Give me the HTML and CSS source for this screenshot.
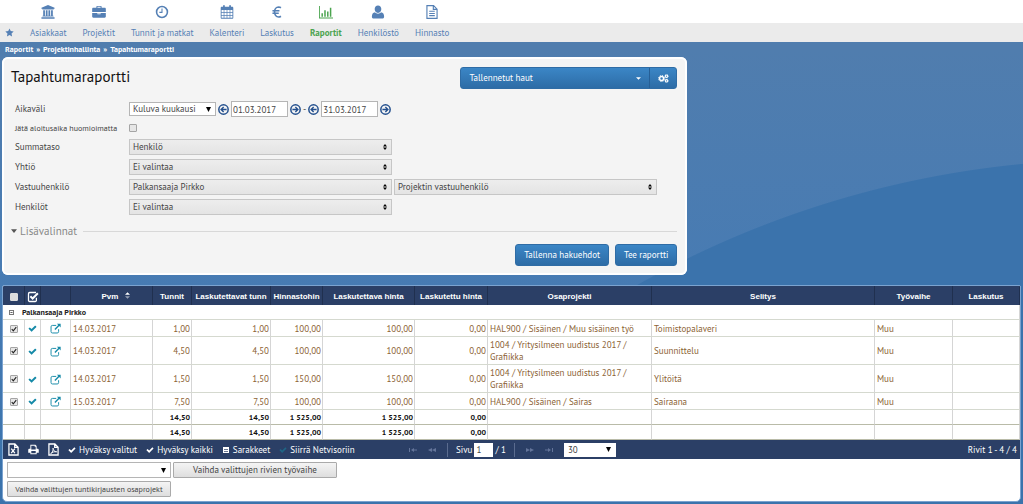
FILE: index.html
```html
<!DOCTYPE html>
<html lang="fi">
<head>
<meta charset="utf-8">
<title>Tapahtumaraportti</title>
<link rel="stylesheet" href="styles.css">
</head>
<body>
<svg class="sprite" aria-hidden="true">
  <symbol id="check" viewBox="0 0 1792 1792"><path d="M1671 566q0 40-28 68l-724 724-136 136q-28 28-68 28t-68-28l-136-136-362-362q-28-28-28-68t28-68l136-136q28-28 68-28t68 28l294 295 656-657q28-28 68-28t68 28l136 136q28 28 28 68z"/></symbol>
  <symbol id="open" viewBox="0 0 16 16"><path d="M9 3.500H3.500a2 2 0 0 0-2 2v7a2 2 0 0 0 2 2h7a2 2 0 0 0 2-2V9" fill="none" stroke="currentColor" stroke-width="1.400"/><path d="M10 1h5.500v5.500l-2-2-5.600 5.600-1.500-1.500L12 3z"/></symbol>
  <symbol id="left" viewBox="0 0 16 16"><circle cx="8" cy="8" r="6.800" fill="none" stroke="currentColor" stroke-width="2.200"/><path d="M12.500 8H4.500M8.200 4.300 4.500 8l3.700 3.700" fill="none" stroke="currentColor" stroke-width="2"/></symbol>
  <symbol id="right" viewBox="0 0 16 16"><circle cx="8" cy="8" r="6.800" fill="none" stroke="currentColor" stroke-width="2.200"/><path d="M3.500 8h8M7.800 4.300 11.500 8l-3.700 3.700" fill="none" stroke="currentColor" stroke-width="2"/></symbol>
</svg>

<nav class="nav">
  <a class="nav-star" href="#" aria-label="Suosikit"><svg viewBox="0 0 16 16"><path d="m8 .8 2.200 4.700 5.200.7-3.800 3.600 1 5.100L8 12.400l-4.600 2.500 1-5.100L.6 6.200l5.200-.7z"/></svg></a>
  <a class="nav-link" href="#"><svg viewBox="0 0 16 16"><path d="M8 0 .5 3v1.200h1V5h13v-.8h1V3zM2.500 6h2v6.200h1V6h2v6.200h1V6h2v6.200h1V6h2v6.200h.8v1H1.700v-1h.8zM.5 14h15v1.700H.5z"/></svg><span>Asiakkaat</span></a>
  <a class="nav-link" href="#"><svg viewBox="0 0 16 16"><path d="M5 3V1.800C5 1.300 5.400 1 6 1h4c.6 0 1 .3 1 .8V3h3.500c.8 0 1.300.5 1.300 1.300V8H.2V4.300C.2 3.500.7 3 1.500 3zm1.200 0h3.600v-.9H6.200zM.2 9h6.100v1.500h3.400V9h6.100v4.200c0 .8-.5 1.300-1.300 1.300h-13c-.8 0-1.300-.5-1.300-1.300zM7.200 9h1.600v.8H7.200z"/></svg><span>Projektit</span></a>
  <a class="nav-link" href="#"><svg viewBox="0 0 16 16"><circle cx="8" cy="8" r="6.200" fill="none" stroke="currentColor" stroke-width="1.800"/><path d="M8 4v4.400H5" fill="none" stroke="currentColor" stroke-width="1.200"/></svg><span>Tunnit ja matkat</span></a>
  <a class="nav-link" href="#"><svg viewBox="0 0 16 16"><path fill-rule="evenodd" d="M2 2h1.500V.3h2V2h5V.3h2V2H14c.7 0 1.200.5 1.200 1.200v11.300c0 .7-.5 1.200-1.200 1.200H2c-.7 0-1.200-.5-1.200-1.200V3.200C.8 2.500 1.300 2 2 2zm-.2 3.800v2.400h2.400V5.800zm3.200 0v2.400h2.600V5.800zm3.400 0v2.400H11V5.800zm3.400 0v2.400h2.400V5.800zM1.800 9v2.400h2.400V9zM5 9v2.400h2.600V9zm3.400 0v2.400H11V9zm3.400 0v2.400h2.400V9zm-10 3.200v2.500h2.400v-2.500zm3.200 0v2.500h2.600v-2.500zm3.400 0v2.500H11v-2.500zm3.400 0v2.500h2.400v-2.500z"/></svg><span>Kalenteri</span></a>
  <a class="nav-link" href="#"><svg viewBox="0 0 16 16"><path d="M12.500 3.200A5 5 0 0 0 9.800 2.300C7.100 2.300 5.200 4.800 5.200 8s1.900 5.700 4.600 5.700c1 0 2-.4 2.700-.9M2.800 6.600h8M2.800 9.400h7.200" fill="none" stroke="currentColor" stroke-width="1.900"/></svg><span>Laskutus</span></a>
  <a class="nav-link current" href="#"><svg viewBox="0 0 16 16"><path d="M0 1h1v13.300h15v1H0zM2.800 9.500h1.700v3.800H2.800zM6 6h1.700v7.300H6zM9.200 7.500h1.700v5.800H9.200zM12.400 3h1.700v10.300h-1.700z"/></svg><span>Raportit</span></a>
  <a class="nav-link" href="#"><svg viewBox="0 0 16 16"><path d="M8 .5c2.300 0 3.800 1.800 3.800 4S10.300 9 8 9 4.200 6.700 4.200 4.500 5.700.5 8 .5zM4.600 8.400C5.500 9.500 6.700 10 8 10s2.500-.5 3.400-1.600c2.400.3 3.600 2.200 3.600 5 0 1.200-.8 2.100-2 2.100H3c-1.200 0-2-.9-2-2.100 0-2.800 1.200-4.700 3.600-5z"/></svg><span>Henkilöstö</span></a>
  <a class="nav-link" href="#"><svg viewBox="0 0 16 16"><path d="M2.200.7h7.600l4 4v10.600H2.200zM9.500 1v4h4M4.800 7.200h6.400M4.800 9.700h6.400M4.800 12.200h6.400" fill="none" stroke="currentColor" stroke-width="1.300"/></svg><span>Hinnasto</span></a>
</nav>

<div class="crumbs"><a href="#">Raportit</a><span>»</span><a href="#">Projektinhallinta</a><span>»</span><a href="#">Tapahtumaraportti</a></div>

<main>
<form class="panel">
  <header class="panel-head">
    <h1>Tapahtumaraportti</h1>
    <div class="saved">
      <button class="saved-main" type="button">Tallennetut haut<svg viewBox="0 0 8 4"><path d="M0 0h8L4 4z"/></svg></button>
      <button class="saved-gear" type="button" aria-label="Asetukset"><svg viewBox="0 0 20 16"><circle cx="6.500" cy="8" r="3.600" fill="none" stroke="currentColor" stroke-width="2.600"/><circle cx="6.500" cy="8" r="5.500" fill="none" stroke="currentColor" stroke-width="1.800" stroke-dasharray="2.300 2.020"/><circle cx="15.500" cy="3.800" r="2.200" fill="none" stroke="currentColor" stroke-width="2"/><circle cx="15.500" cy="3.800" r="3.300" fill="none" stroke="currentColor" stroke-width="1" stroke-dasharray="1.500 1.460"/><circle cx="15.500" cy="12.200" r="2.200" fill="none" stroke="currentColor" stroke-width="2"/><circle cx="15.500" cy="12.200" r="3.300" fill="none" stroke="currentColor" stroke-width="1" stroke-dasharray="1.500 1.460"/></svg></button>
    </div>
  </header>
  <div class="fields">
    <label for="range">Aikaväli</label>
    <div class="field dates">
      <select id="range" class="drop range"><option>Kuluva kuukausi</option></select>
      <button class="step" type="button" aria-label="Edellinen"><svg><use href="#left"/></svg></button>
      <input class="date" type="text" value="01.03.2017" aria-label="Alkupäivä">
      <button class="step" type="button" aria-label="Seuraava"><svg><use href="#right"/></svg></button>
      <span>-</span>
      <button class="step" type="button" aria-label="Edellinen"><svg><use href="#left"/></svg></button>
      <input class="date" type="text" value="31.03.2017" aria-label="Loppupäivä">
      <button class="step" type="button" aria-label="Seuraava"><svg><use href="#right"/></svg></button>
    </div>
    <label class="compact" for="skip">Jätä aloitusaika huomioimatta</label>
    <div class="field"><input id="skip" type="checkbox"></div>
    <label for="level">Summataso</label>
    <div class="field"><select id="level" class="pick"><option>Henkilö</option></select></div>
    <label for="company">Yhtiö</label>
    <div class="field"><select id="company" class="pick"><option>Ei valintaa</option></select></div>
    <label for="owner">Vastuuhenkilö</label>
    <div class="field"><select id="owner" class="pick"><option>Palkansaaja Pirkko</option></select><select class="pick" aria-label="Rooli"><option>Projektin vastuuhenkilö</option></select></div>
    <label for="people">Henkilöt</label>
    <div class="field"><select id="people" class="pick"><option>Ei valintaa</option></select></div>
  </div>
  <div class="more"><svg viewBox="0 0 8 5"><path d="M0 0h8L4 5z"/></svg><span>Lisävalinnat</span></div>
  <div class="actions"><button class="blue" type="button">Tallenna hakuehdot</button><button class="blue" type="button">Tee raportti</button></div>
</form>

<section class="grid">
<table>
  <colgroup><col class="c-sel"><col class="c-ok"><col class="c-open"><col class="c-date"><col class="c-hours"><col class="c-bill"><col class="c-list"><col class="c-price"><col class="c-billed"><col class="c-project"><col><col class="c-phase"><col class="c-inv"></colgroup>
  <thead><tr>
    <th><input class="head-box" type="checkbox" aria-label="Valitse kaikki"></th>
    <th><svg class="head-check" viewBox="0 0 16 16"><path d="M12.500 9v3.500a1.500 1.500 0 0 1-1.500 1.500H3.500A1.500 1.500 0 0 1 2 12.500v-9A1.500 1.500 0 0 1 3.500 2H12" fill="none" stroke="currentColor" stroke-width="1.700"/><path d="m4.500 7 3 3L14.500 3" fill="none" stroke="currentColor" stroke-width="2.600"/></svg></th>
    <th></th>
    <th class="sorted">Pvm <svg class="sort" viewBox="0 0 6 8"><path d="M3 0l3 3H0z"/><path d="M0 5h6L3 8z" opacity=".5"/></svg></th>
    <th>Tunnit</th><th>Laskutettavat tunn</th><th>Hinnastohin</th><th>Laskutettava hinta</th><th>Laskutettu hinta</th><th>Osaprojekti</th><th>Selitys</th><th>Työvaihe</th><th>Laskutus</th>
  </tr></thead>
  <tbody>
    <tr class="group"><td colspan="13"><svg viewBox="0 0 7 7"><path d="M.5.5h6v6h-6zM2 3.500h3" fill="none" stroke="currentColor"/></svg>Palkansaaja Pirkko</td></tr>
    <tr><td><input type="checkbox" checked aria-label="Valitse rivi"></td><td><svg class="ok"><use href="#check"/></svg></td><td><a href="#" aria-label="Avaa"><svg class="go"><use href="#open"/></svg></a></td><td>14.03.2017</td><td>1,00</td><td>1,00</td><td>100,00</td><td>100,00</td><td>0,00</td><td>HAL900 / Sisäinen / Muu sisäinen työ</td><td>Toimistopalaveri</td><td>Muu</td><td></td></tr>
    <tr><td><input type="checkbox" checked aria-label="Valitse rivi"></td><td><svg class="ok"><use href="#check"/></svg></td><td><a href="#" aria-label="Avaa"><svg class="go"><use href="#open"/></svg></a></td><td>14.03.2017</td><td>4,50</td><td>4,50</td><td>100,00</td><td>100,00</td><td>0,00</td><td>1004 / Yritysilmeen uudistus 2017 / Grafiikka</td><td>Suunnittelu</td><td>Muu</td><td></td></tr>
    <tr><td><input type="checkbox" checked aria-label="Valitse rivi"></td><td><svg class="ok"><use href="#check"/></svg></td><td><a href="#" aria-label="Avaa"><svg class="go"><use href="#open"/></svg></a></td><td>14.03.2017</td><td>1,50</td><td>1,50</td><td>150,00</td><td>150,00</td><td>0,00</td><td>1004 / Yritysilmeen uudistus 2017 / Grafiikka</td><td>Ylitöitä</td><td>Muu</td><td></td></tr>
    <tr><td><input type="checkbox" checked aria-label="Valitse rivi"></td><td><svg class="ok"><use href="#check"/></svg></td><td><a href="#" aria-label="Avaa"><svg class="go"><use href="#open"/></svg></a></td><td>15.03.2017</td><td>7,50</td><td>7,50</td><td>100,00</td><td>100,00</td><td>0,00</td><td>HAL900 / Sisäinen / Sairas</td><td>Sairaana</td><td>Muu</td><td></td></tr>
    <tr class="sum"><td></td><td></td><td></td><td></td><td>14,50</td><td>14,50</td><td>1 525,00</td><td>1 525,00</td><td>0,00</td><td></td><td></td><td></td><td></td></tr>
    <tr class="sum"><td></td><td></td><td></td><td></td><td>14,50</td><td>14,50</td><td>1 525,00</td><td>1 525,00</td><td>0,00</td><td></td><td></td><td></td><td></td></tr>
  </tbody>
</table>
<div class="bar">
  <div class="tools">
    <button type="button" class="file" aria-label="Excel"><svg viewBox="0 0 12 14"><path d="M1 1h6.500L11 4.500V13H1zM7.300 1v3.700H11M3.500 6l4 5M7.500 6l-4 5" fill="none" stroke="currentColor" stroke-width="1.400"/></svg></button>
    <button type="button" class="file" aria-label="Tulosta"><svg viewBox="0 0 14 14"><path fill-rule="evenodd" d="M3 1h6.500L11 2.500V6h1c1 0 1.700.7 1.700 1.600V11H11v2H3v-2H.3V7.600C.3 6.700 1 6 2 6h1zm1.200 1.200V7h5.600V3.500H8.500V2.200zM4.200 9v2.800h5.600V9z"/></svg></button>
    <button type="button" class="file" aria-label="PDF"><svg viewBox="0 0 12 14"><path d="M1 1h6.500L11 4.500V13H1zM7.300 1v3.700H11" fill="none" stroke="currentColor" stroke-width="1.400"/><path d="M3 11.500c2-1.500 3-4 2.500-6 .2 2.500 1.500 4 4 4-3-.3-4.500.3-6.500 2z" fill="none" stroke="currentColor"/></svg></button>
    <button type="button" class="tool"><svg><use href="#check"/></svg>Hyväksy valitut</button>
    <button type="button" class="tool"><svg><use href="#check"/></svg>Hyväksy kaikki</button>
    <button type="button" class="tool"><svg viewBox="0 0 8 8"><path d="M1 1h6v6H1z"/><path d="M2 3.500h4M2 5.500h4" stroke="#2b3f66" stroke-width=".7"/></svg>Sarakkeet</button>
    <button type="button" class="tool transfer"><svg><use href="#check"/></svg>Siirrä Netvisoriin</button>
  </div>
  <div class="pager">
    <button type="button" aria-label="Ensimmäinen"><svg viewBox="0 0 8 6"><path d="M0 1h1v4H0zM5 1v4L2 3zM8 2.500v1H5v-1z"/></svg></button>
    <button type="button" aria-label="Edellinen"><svg viewBox="0 0 8 6"><path d="M4 1v4L0 3zM8 1v4L4 3z"/></svg></button>
    <label class="page">Sivu <input type="text" value="1"> / 1</label>
    <button type="button" aria-label="Seuraava"><svg viewBox="0 0 8 6"><path d="M0 1v4l4-2zM4 1v4l4-2z"/></svg></button>
    <button type="button" aria-label="Viimeinen"><svg viewBox="0 0 8 6"><path d="M7 1h1v4H7zM3 1v4l3-2zM0 2.500v1h3v-1z"/></svg></button>
    <select class="drop size" aria-label="Rivejä sivulla"><option>30</option></select>
  </div>
  <div class="count">Rivit 1 - 4 / 4</div>
</div>
<div class="bulk">
  <select class="drop" aria-label="Työvaihe"><option></option></select>
  <button type="button" class="gray">Vaihda valittujen rivien työvaihe</button>
  <button type="button" class="gray compact">Vaihda valittujen tuntikirjausten osaprojekt</button>
</div>
</section>
</main>
</body>
</html>
```
FILE: styles.css
```css
* { box-sizing: border-box; }
body {
  margin: 0;
  min-height: 100vh;
  font: 9px/12px "PT Sans", Lato, sans-serif;
  color: #444;
  background:
    radial-gradient(circle 973px at 1115px 1132px, #3b73ac 0 972px, transparent 973px),
    linear-gradient(#507dae 50px, #477bb3 290px, #3b73ac 480px);
  background-color: #3b73ac;
}
button, select, input { font: inherit; color: inherit; margin: 0; }
button { cursor: pointer; padding: 0; border: 0; background: none; white-space: nowrap; }
a { color: inherit; text-decoration: none; }
svg { fill: currentColor; display: block; }
.sprite { display: none; }
.compact { font-size: 8px; }

/* Navigation */
.nav {
  display: flex;
  gap: 16px;
  padding-left: 5px;
  color: #5580b5;
  background: linear-gradient(#fff 23px, #ebebeb 23px);
}
.nav-star { align-self: end; padding: 5px 0; }
.nav-star svg { width: 9px; height: 9px; }
.nav-link { display: grid; grid-template-rows: 23px 19px; place-items: center; }
.nav-link svg { width: 14px; height: 14px; }
.nav-link.current { color: #4ba44f; font-weight: bold; }
.crumbs { display: flex; gap: 3px; padding: 1px 5px 2px; font-size: 8px; font-weight: bold; color: #fff; }

/* Search panel */
.panel {
  width: 67%;
  margin-left: 2px;
  padding: 10px 10px 9px 9px;
  border-radius: 6px;
  background: #f4f4f4;
  box-shadow: inset 0 0 0 2px #fff;
}
.panel-head { display: flex; justify-content: space-between; }
h1 { margin: 0; font-size: 15px; line-height: 20px; font-weight: normal; color: #111; }
.saved { display: flex; width: 217px; height: 22px; border-radius: 3px; overflow: hidden; color: #fff; background: linear-gradient(#3b86c6, #2d6ca6); border: 1px solid #2f6ca5; }
.saved-main { flex: 1; display: flex; justify-content: space-between; align-items: center; padding: 0 8px; border-right: 1px solid #265f96; }
.saved-main svg { width: 5px; height: 3px; }
.saved-gear { width: 26px; display: grid; place-items: center; }
.saved-gear svg { width: 11px; height: 9px; }
.fields { display: grid; grid-template-columns: 114px 1fr; row-gap: 4px; align-items: center; margin-top: 12px; padding-left: 4px; white-space: nowrap; }
.field { display: flex; gap: 2px; align-items: center; min-height: 14px; }
.drop {
  appearance: none;
  border: 1px solid #b5b5b5;
  border-radius: 0;
  background: #fff url("data:image/svg+xml,%3Csvg xmlns='http://www.w3.org/2000/svg' viewBox='0 0 5 5'%3E%3Cpath d='M0 0h5L2.500 5z'/%3E%3C/svg%3E") no-repeat right 4px center / 5px 5px;
  padding: 0 3px;
}
.range { width: 87px; height: 14px; }
.step { color: #24508e; }
.step svg { width: 11px; height: 11px; }
.date { width: 57px; height: 16px; padding: 0 1px; border: 1px solid #b5b5b5; background: #fff; }
.pick {
  appearance: none;
  width: 263px;
  height: 16px;
  padding: 0 3px;
  border: 1px solid #c6c6c6;
  border-radius: 0;
  background: url("data:image/svg+xml,%3Csvg xmlns='http://www.w3.org/2000/svg' viewBox='0 0 4 6'%3E%3Cpath d='M0 2.500h4L2 0zM0 3.500h4L2 6z'/%3E%3C/svg%3E") no-repeat right 4px center / 4px 6px, linear-gradient(#ededed, #e4e4e4);
}
input[type="checkbox"] { appearance: none; width: 8px; height: 8px; border: 1px solid #a5a5a5; border-radius: 1px; background: #e6e6e6; display: block; }
input[type="checkbox"]:checked { background: #e6e6e6 url("data:image/svg+xml,%3Csvg xmlns='http://www.w3.org/2000/svg' viewBox='0 0 8 8'%3E%3Cpath d='M1 4l2 2.500L7 1.500' fill='none' stroke='%23222' stroke-width='1.500'/%3E%3C/svg%3E") center / 6px 6px no-repeat; }
.more { display: flex; align-items: center; gap: 3px; margin-top: 9px; font-size: 11px; line-height: 14px; color: #888; }
.more svg { width: 6px; height: 4px; color: #555; }
.more::after { content: ""; flex: 1; height: 1px; margin-left: 3px; background: #d8d8d8; }
.actions { display: flex; justify-content: flex-end; gap: 6px; margin-top: 6px; }
.blue { height: 22px; padding: 0 8px; border: 1px solid #2f6ca5; border-radius: 3px; color: #fff; background: linear-gradient(#3b86c6, #2d6ca6); }

/* Report table */
.grid { margin: 10px 2px 0; border: 1px solid #7ba3d0; border-radius: 2px 2px 5px 5px; background: #fff; overflow: hidden; }
table { width: 100%; table-layout: fixed; border-collapse: separate; border-spacing: 0; }
.c-sel { width: 22px; } .c-ok { width: 16px; } .c-open { width: 30px; } .c-date { width: 82px; }
.c-hours { width: 39px; } .c-bill { width: 79px; } .c-list { width: 52px; } .c-price { width: 92px; }
.c-billed { width: 73px; } .c-project { width: 164px; } .c-phase { width: 78px; } .c-inv { width: 67px; }
th { height: 19px; padding: 3px 0 0; background: #2b3f66; color: #fff; border-right: 1px solid #20304f; font: bold 8px/12px "Liberation Sans", sans-serif; white-space: nowrap; }
th svg, th input { margin: 0 auto; }
.sorted { padding-left: 8px; }
.head-check { width: 12px; height: 12px; }
.head-box[type="checkbox"] { background: #ddd; border-color: #ddd; }
th .sort { display: inline-block; width: 5px; height: 7px; margin-left: 4px; }
td { height: 17px; padding: 2px 2px 1px; line-height: 12px; color: #8b6234; border-right: 1px solid #d5d5d5; border-bottom: 1px solid #d5d9cf; }
td:nth-child(-n+3) svg, td input { margin: 0 auto; }
td:nth-child(n+5):nth-child(-n+9) { text-align: right; padding-right: 1px; }
.ok { width: 9px; height: 9px; color: #168aa8; }
.go { width: 11px; height: 11px; color: #168aa8; }
.group td { height: 15px; padding: 1px 6px; font-size: 8px; font-weight: bold; color: #222; }
.group td:first-child svg { display: inline-block; width: 5px; height: 5px; margin-right: 8px; }
.sum td { height: 15px; padding: 1px; font-size: 8px; font-weight: bold; color: #111; border-bottom-color: #b9bba8; }

/* Footer bar */
.bar { display: flex; align-items: center; height: 19px; padding: 0 3px 0 5px; color: #fff; background: #2b3f66; }
.tools { display: flex; align-items: center; gap: 9px; flex: 1; }
.tool { display: flex; align-items: center; gap: 3px; }
.tool svg { width: 8px; height: 8px; }
.transfer svg { color: #1f6585; }
.file svg { width: 11px; height: 13px; }
.pager { display: flex; align-items: center; gap: 11px; }
.pager svg { width: 8px; height: 6px; color: #64759a; }
.page { display: flex; align-items: center; gap: 2px; padding: 0 8px; border: solid #5b6c8f; border-width: 0 1px; }
.page input { width: 19px; height: 14px; padding: 0 2px; border: 0; background: #fff; color: #444; }
.size { width: 52px; height: 14px; color: #444; border-color: #fff; }
.count { flex: 1; text-align: right; }
.bulk { display: grid; grid-template-columns: 164px 164px; gap: 3px 2px; padding: 3px 4px 4px; }
.bulk .drop, .gray { height: 16px; }
.gray { padding: 0 4px; border: 1px solid #aaa; border-radius: 1px; background: linear-gradient(#f4f4f4, #dedede); overflow: hidden; }
```
